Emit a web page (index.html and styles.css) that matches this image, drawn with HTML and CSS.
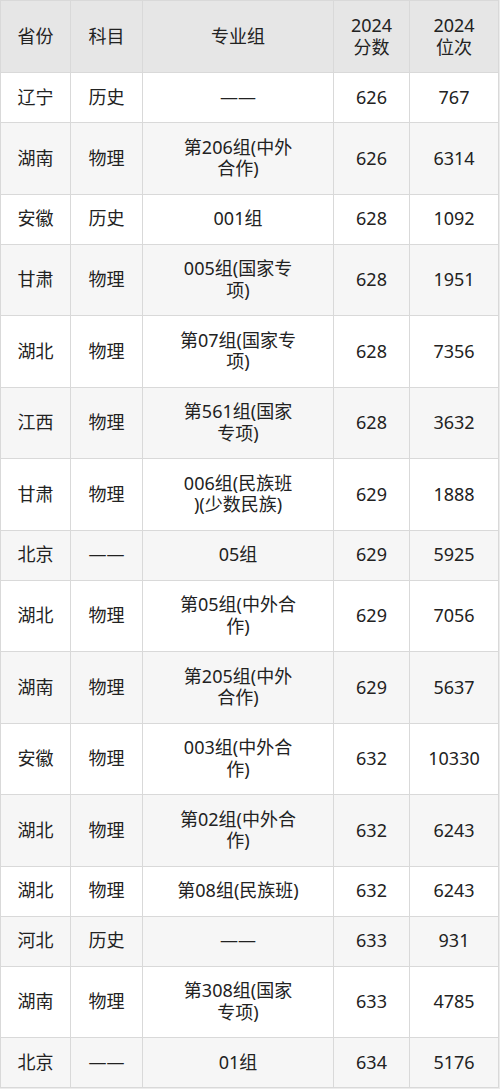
FILE: index.html
```html
<!DOCTYPE html>
<html lang="zh-CN">
<head>
<meta charset="utf-8">
<link rel="stylesheet" href="styles.css">
</head>
<body>
<table class="score-table">
  <colgroup>
    <col class="c-prov"><col class="c-subj"><col class="c-group"><col class="c-score"><col class="c-rank">
  </colgroup>
  <thead>
    <tr><th>省份</th><th>科目</th><th>专业组</th><th>2024<br>分数</th><th>2024<br>位次</th></tr>
  </thead>
  <tbody>
    <tr><td>辽宁</td><td>历史</td><td>——</td><td>626</td><td>767</td></tr>
    <tr><td>湖南</td><td>物理</td><td>第206组(中外<br>合作)</td><td>626</td><td>6314</td></tr>
    <tr><td>安徽</td><td>历史</td><td>001组</td><td>628</td><td>1092</td></tr>
    <tr><td>甘肃</td><td>物理</td><td>005组(国家专<br>项)</td><td>628</td><td>1951</td></tr>
    <tr><td>湖北</td><td>物理</td><td>第07组(国家专<br>项)</td><td>628</td><td>7356</td></tr>
    <tr><td>江西</td><td>物理</td><td>第561组(国家<br>专项)</td><td>628</td><td>3632</td></tr>
    <tr><td>甘肃</td><td>物理</td><td>006组(民族班<br>)(少数民族)</td><td>629</td><td>1888</td></tr>
    <tr><td>北京</td><td>——</td><td>05组</td><td>629</td><td>5925</td></tr>
    <tr><td>湖北</td><td>物理</td><td>第05组(中外合<br>作)</td><td>629</td><td>7056</td></tr>
    <tr><td>湖南</td><td>物理</td><td>第205组(中外<br>合作)</td><td>629</td><td>5637</td></tr>
    <tr><td>安徽</td><td>物理</td><td>003组(中外合<br>作)</td><td>632</td><td>10330</td></tr>
    <tr><td>湖北</td><td>物理</td><td>第02组(中外合<br>作)</td><td>632</td><td>6243</td></tr>
    <tr><td>湖北</td><td>物理</td><td>第08组(民族班)</td><td>632</td><td>6243</td></tr>
    <tr><td>河北</td><td>历史</td><td>——</td><td>633</td><td>931</td></tr>
    <tr><td>湖南</td><td>物理</td><td>第308组(国家<br>专项)</td><td>633</td><td>4785</td></tr>
    <tr><td>北京</td><td>——</td><td>01组</td><td>634</td><td>5176</td></tr>
  </tbody>
</table>
</body>
</html>
```
FILE: styles.css
```css
html, body {
  margin: 0;
  padding: 0;
  background: #ececec;
}
.score-table {
  border-collapse: collapse;
  table-layout: fixed;
  width: 498px;
  margin: 0;
  font-family: "Noto Sans", "Noto Sans CJK SC", sans-serif;
  font-size: 18px;
  line-height: 21.5px;
  color: #222;
  background: #fff;
}
.c-prov { width: 70px; }
.c-subj { width: 72px; }
.c-group { width: 191px; }
.c-score { width: 76px; }
.c-rank { width: 89px; }
.score-table th,
.score-table td {
  border: 1px solid #d9d9d9;
  padding: 13.75px 2px;
  text-align: center;
  vertical-align: middle;
  font-weight: normal;
}
.score-table th {
  background: #e6e6e6;
  padding: 14px 2px;
}
.score-table tbody tr:nth-child(even) td {
  background: #f6f6f6;
}
```
